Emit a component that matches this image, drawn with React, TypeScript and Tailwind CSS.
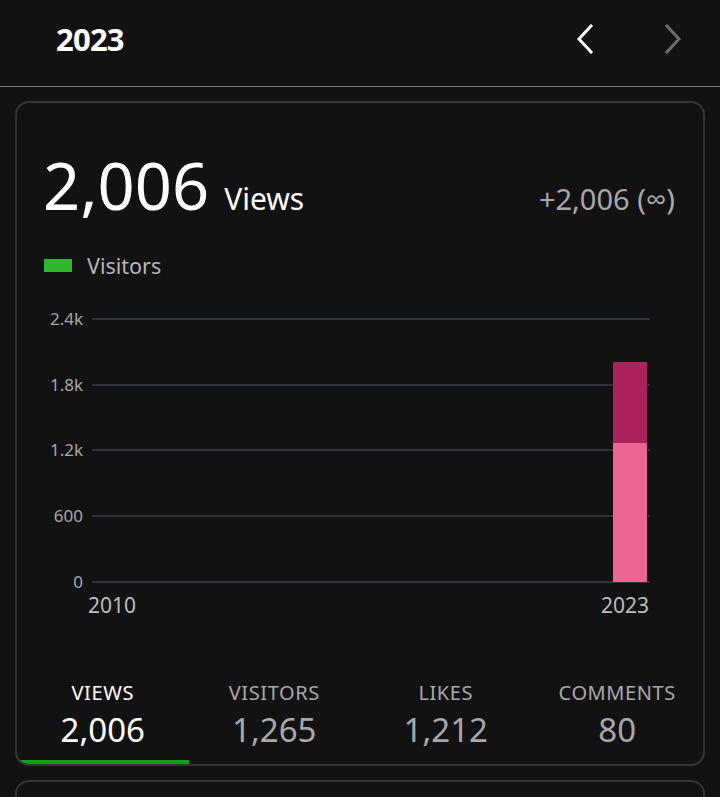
import React from "react";

const font = { fontFamily: '"Noto Sans", "Open Sans", sans-serif' };

const grid = [
  { y: 19, label: "2.4k" },
  { y: 85, label: "1.8k" },
  { y: 150, label: "1.2k" },
  { y: 216, label: "600" },
  { y: 282, label: "0" },
];

const tabs = [
  { label: "VIEWS", value: "2,006", active: true },
  { label: "VISITORS", value: "1,265" },
  { label: "LIKES", value: "1,212" },
  { label: "COMMENTS", value: "80" },
];

function Chart() {
  return (
    <svg width="686" height="330" viewBox="0 0 686 330" className="block">
      {grid.map((g) => (
        <g key={g.label}>
          <line x1="75" x2="633" y1={g.y} y2={g.y} stroke="#2f3338" strokeWidth="2" />
          <text x="66" y={g.y + 6} textAnchor="end" fill="#a8a8a8" fontSize="17" style={font}>
            {g.label}
          </text>
        </g>
      ))}
      <rect x="596" y="62" width="34" height="81" fill="#ad225d" />
      <rect x="596" y="143" width="34" height="139" fill="#ea6593" />
      <text x="71" y="313" fill="#bdbdbd" fontSize="21" style={font}>2010</text>
      <text x="632" y="313" textAnchor="end" fill="#bdbdbd" fontSize="21" style={font}>2023</text>
    </svg>
  );
}

export default function App() {
  return (
    <div className="h-screen bg-[#121212] text-white overflow-hidden" style={font}>
      <header className="h-[87px] pb-[8px] flex items-center justify-between pl-[56px] pr-[38px] border-b border-[#7a7a7a]">
        <h1 className="text-[31px] font-bold leading-none tracking-tight">2023</h1>
        <div className="flex items-center gap-[70px]">
          <svg width="18" height="30" viewBox="0 0 18 30" fill="none">
            <path d="M15 2 3 15l12 13" stroke="#ffffff" strokeWidth="3" strokeLinecap="square" />
          </svg>
          <svg width="18" height="30" viewBox="0 0 18 30" fill="none">
            <path d="M3 2l12 13L3 28" stroke="#6b6b6b" strokeWidth="3" strokeLinecap="square" />
          </svg>
        </div>
      </header>

      <main className="px-[15px] pt-[14px]">
        <section className="rounded-[14px] border-2 border-[#353535] overflow-hidden">
          <div className="pt-[50px] pl-[26px] pr-[28px] flex items-baseline justify-between">
            <div className="flex items-baseline gap-[15px]">
              <span className="text-[65px] leading-none font-normal">2,006</span>
              <span className="text-[30px] leading-none">Views</span>
            </div>
            <span className="text-[29px] leading-none text-[#a8a8a8]">+2,006 (∞)</span>
          </div>

          <div className="mt-[37px] pl-[27px] flex items-center gap-[15px]">
            <span className="w-[28px] h-[13px] bg-[#2db82d]" />
            <span className="text-[21.5px] leading-none text-[#b5b5b5]">Visitors</span>
          </div>

          <div className="mt-[23px]">
            <Chart />
          </div>

          <div className="mt-[53px] grid grid-cols-4">
            {tabs.map((t) => (
              <div key={t.label} className="flex flex-col items-center">
                <span className={`text-[20px] tracking-[0.6px] leading-none ${t.active ? "text-white" : "text-[#a8a8a8]"}`}>
                  {t.label}
                </span>
                <span className={`mt-[10px] text-[33px] leading-none ${t.active ? "text-white" : "text-[#a8a8a8]"}`}>
                  {t.value}
                </span>
                <span className={`mt-[14px] h-[4px] w-full ${t.active ? "bg-[#13a013]" : "bg-transparent"}`} />
              </div>
            ))}
          </div>
        </section>

        <section className="mt-[14px] h-[60px] rounded-[14px] border-2 border-[#353535]" />
      </main>
    </div>
  );
}
